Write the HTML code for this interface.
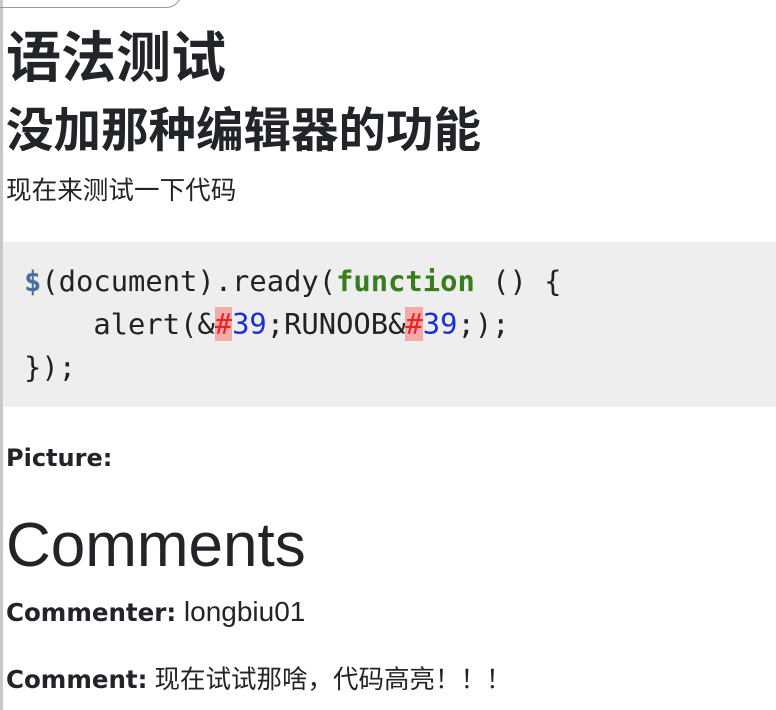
<!DOCTYPE html>
<html><head><meta charset="utf-8"><style>
html,body{margin:0;padding:0;background:#fff;width:776px;height:710px;overflow:hidden;position:relative;color:#212529;font-family:"Liberation Sans","Noto Sans CJK SC",sans-serif}
.lb{position:absolute;left:0;top:0;width:3px;height:710px;background:#c8c8c8}
.tb{position:absolute;left:-20px;top:-40px;width:200px;height:46px;border:1px solid #999;border-radius:0 0 16px 0}
.a{position:absolute;left:6px;white-space:nowrap;line-height:1}
pre{position:absolute;left:3px;top:242px;width:773px;height:165px;margin:0;background:#eee;font-family:"DejaVu Sans Mono","Liberation Mono",monospace;font-size:28.8px;line-height:43px;padding:18px 0 0 21px;box-sizing:border-box;color:#222}
.g{color:#3a7d1c;font-weight:bold}.d{color:#4a6f9a;font-weight:bold}
.r{color:#e22;background:#f4aaaa}.n{color:#1a2fd6}
b{font-family:"DejaVu Sans",sans-serif;font-weight:bold;font-size:24.5px}
</style></head><body>
<div class="lb"></div><div class="tb"></div>
<div class="a" style="top:31px;font-size:55px;font-weight:bold">语法测试</div>
<div class="a" style="top:108px;font-size:47.5px;font-weight:bold">没加那种编辑器的功能</div>
<div class="a" style="top:179px;font-size:25.6px">现在来测试一下代码</div>
<pre><span class="d">$</span>(document).ready(<span class="g">function</span> () {
    alert(&amp;<span class="r">#</span><span class="n">39</span>;RUNOOB&amp;<span class="r">#</span><span class="n">39</span>;);
});</pre>
<div class="a" style="top:446px;font-size:24px"><b style="font-size:24px">Picture:</b></div>
<div class="a" style="top:515px;font-size:62px">Comments</div>
<div class="a" style="top:598px;font-size:28px"><b>Commenter:</b> longbiu01</div>
<div class="a" style="top:668px;font-size:25.5px"><b>Comment:</b> 现在试试那啥，代码高亮！！！</div>
</body></html>
